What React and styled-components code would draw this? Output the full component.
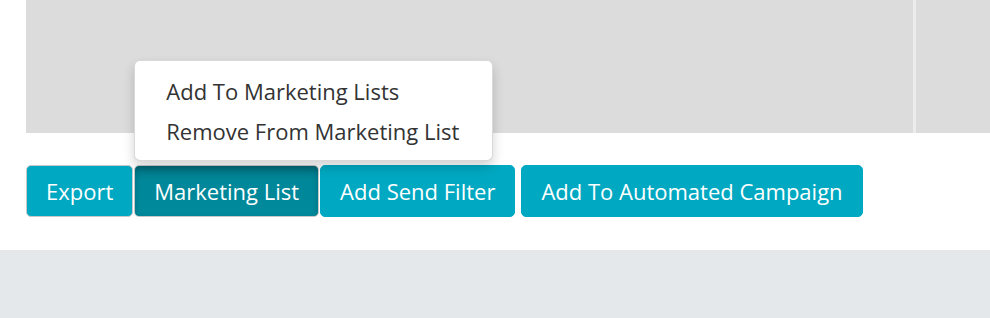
import React from 'react';
import styled, { createGlobalStyle, css } from 'styled-components';

const GlobalStyle = createGlobalStyle`
  body {
    margin: 0;
    background: #fff;
    font-family: "Open Sans", "Liberation Sans", sans-serif;
  }
`;

const Page = styled.div`
  width: 990px;
  height: 318px;
  display: flex;
  flex-direction: column;
  overflow: hidden;
`;

const Main = styled.div`
  height: 250px;
  background: #fff;
  padding-left: 26px;
  box-sizing: border-box;
`;

const Preview = styled.div`
  height: 133px;
  display: grid;
  grid-template-columns: 887px 1fr;
  gap: 3px;
  background: #ececec;
`;

const Panel = styled.div`
  background: #dcdcdc;
`;

const Toolbar = styled.div`
  margin-top: 32px;
  display: flex;
  align-items: flex-start;
`;

const Group = styled.div`
  display: flex;
  gap: 1px;
  margin-right: 6px;
`;

const DropWrap = styled.div`
  position: relative;
`;

const Button = styled.button`
  height: 52px;
  padding: 0 19px;
  border-radius: 5px;
  border: 1px solid ${p => (p.$bordered ? '#c8c8c8' : '#00a8c1')};
  background: #00a8c1;
  color: #fff;
  font-family: "Open Sans", "Liberation Sans", sans-serif;
  font-size: 22px;
  font-weight: 400;
  white-space: nowrap;
  cursor: pointer;
  ${p =>
    p.$active &&
    css`
      background: linear-gradient(#00798a, #008799 30%, #008a9c);
      box-shadow: inset 0 3px 6px rgba(0, 0, 0, 0.2);
    `}
`;

const Menu = styled.ul`
  position: absolute;
  left: 0;
  bottom: calc(100% + 4px);
  width: 359px;
  margin: 0;
  padding: 10px 0 9px;
  list-style: none;
  background: #fff;
  border: 1px solid rgba(0, 0, 0, 0.15);
  border-radius: 6px;
  box-shadow: 0 6px 12px rgba(0, 0, 0, 0.175);
  box-sizing: border-box;
  z-index: 2;
`;

const MenuItem = styled.li`
  height: 40px;
  line-height: 40px;
  padding-left: 31px;
  font-size: 22px;
  color: #333;
  white-space: nowrap;
`;

const Footer = styled.div`
  flex: 1;
  background: #e4e8eb;
`;

export default function App() {
  return (
    <Page>
      <GlobalStyle />
      <Main>
        <Preview>
          <Panel />
          <Panel />
        </Preview>
        <Toolbar>
          <Group>
            <Button $bordered>Export</Button>
            <DropWrap>
              <Button $bordered $active>Marketing List</Button>
              <Menu>
                <MenuItem>Add To Marketing Lists</MenuItem>
                <MenuItem>Remove From Marketing List</MenuItem>
              </Menu>
            </DropWrap>
            <Button>Add Send Filter</Button>
          </Group>
          <Button>Add To Automated Campaign</Button>
        </Toolbar>
      </Main>
      <Footer />
    </Page>
  );
}
